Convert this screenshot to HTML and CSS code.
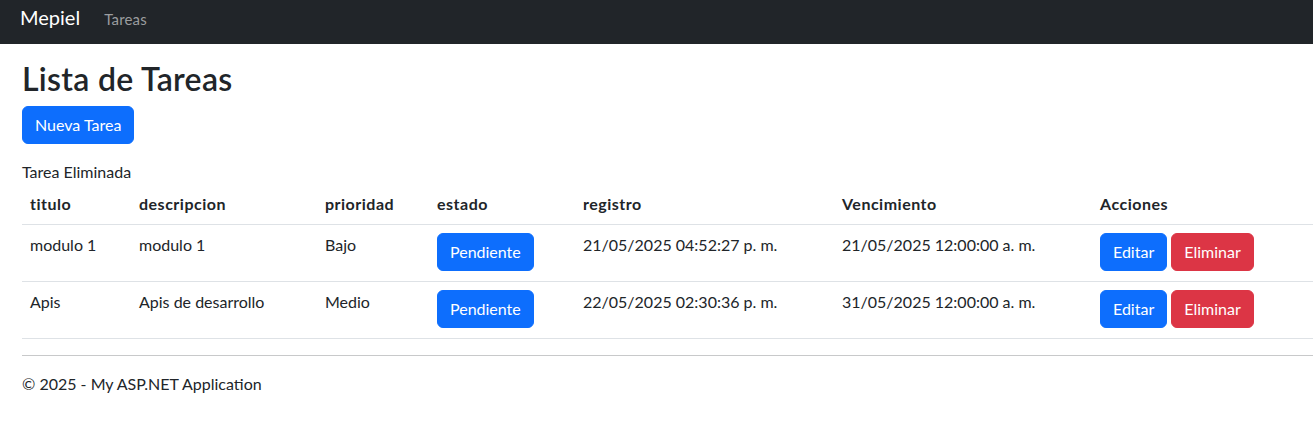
FILE: index.html
```html
<!DOCTYPE html>
<html lang="es">
<head>
<meta charset="utf-8">
<title>Lista de Tareas - Mepiel</title>
<link rel="stylesheet" href="styles.css">
</head>
<body>
<nav class="navbar">
  <a class="brand" href="#">Mepiel</a>
  <a class="nav-link" href="#">Tareas</a>
</nav>
<main class="content">
  <h2 class="title">Lista de Tareas</h2>
  <p class="toolbar"><a class="btn btn-primary" href="#">Nueva Tarea</a></p>
  <div class="notice">Tarea Eliminada</div>
  <table class="table">
    <colgroup>
      <col class="c-titulo"><col class="c-desc"><col class="c-prio"><col class="c-estado"><col class="c-reg"><col class="c-venc"><col class="c-acc">
    </colgroup>
    <thead>
      <tr><th>titulo</th><th>descripcion</th><th>prioridad</th><th>estado</th><th>registro</th><th>Vencimiento</th><th>Acciones</th></tr>
    </thead>
    <tbody>
      <tr>
        <td>modulo 1</td><td>modulo 1</td><td>Bajo</td>
        <td><a class="btn btn-primary" href="#">Pendiente</a></td>
        <td>21/05/2025 04:52:27 p. m.</td><td>21/05/2025 12:00:00 a. m.</td>
        <td><a class="btn btn-primary" href="#">Editar</a> <a class="btn btn-danger" href="#">Eliminar</a></td>
      </tr>
      <tr>
        <td>Apis</td><td>Apis de desarrollo</td><td>Medio</td>
        <td><a class="btn btn-primary" href="#">Pendiente</a></td>
        <td>22/05/2025 02:30:36 p. m.</td><td>31/05/2025 12:00:00 a. m.</td>
        <td><a class="btn btn-primary" href="#">Editar</a> <a class="btn btn-danger" href="#">Eliminar</a></td>
      </tr>
    </tbody>
  </table>
  <hr class="divider">
  <footer class="footer"><p>&copy; 2025 - My ASP.NET Application</p></footer>
</main>
</body>
</html>
```
FILE: styles.css
```css
* { box-sizing: border-box; }
html, body { margin: 0; padding: 0; }
body {
  font-family: Lato, "Open Sans", "Liberation Sans", sans-serif;
  font-size: 16px;
  line-height: 1.5;
  color: #212529;
  background: #fff;
  overflow-x: hidden;
}
.navbar {
  display: flex;
  align-items: baseline;
  height: 44px;
  padding: 2px 20px 0;
  background: #212529;
}
.brand {
  font-size: 20px;
  line-height: 30px;
  color: #fff;
  text-decoration: none;
  margin-right: 16px;
}
.nav-link {
  font-size: 15px;
  padding: 0 8px;
  color: #9b9d9f;
  text-decoration: none;
  letter-spacing: 0.2px;
}
.content { padding: 0 0 0 22px; }
.title {
  margin: 16px 0 8px;
  font-size: 32px;
  line-height: 1.2;
  font-weight: 600;
  letter-spacing: 0.3px;
}
.toolbar { margin: 0 0 16px; }
.btn {
  display: inline-block;
  padding: 6px 12px;
  font-size: 16px;
  line-height: 24px;
  border: 1px solid transparent;
  border-radius: 6px;
  color: #fff;
  text-decoration: none;
  vertical-align: middle;
}
.btn-primary { background: #0d6efd; border-color: #0d6efd; }
.btn-danger { background: #dc3545; border-color: #dc3545; }
.table {
  width: 100%;
  table-layout: fixed;
  border-collapse: collapse;
  margin-bottom: 16px;
}
.c-titulo { width: 109px; }
.c-desc { width: 186px; }
.c-prio { width: 112px; }
.c-estado { width: 146px; }
.c-reg { width: 259px; }
.c-venc { width: 258px; }
.table th {
  text-align: left;
  font-weight: 700;
  padding: 8px;
  border-bottom: 1px solid #dee2e6;
  vertical-align: bottom;
  letter-spacing: 0.5px;
}
.table td {
  padding: 8px 8px 10px;
  border-bottom: 1px solid #dee2e6;
  vertical-align: top;
  white-space: nowrap;
}
.divider {
  margin: 0 0 16px;
  border: 0;
  border-top: 1px solid #c8c9ca;
}
.footer p { margin: 0 0 16px; }
```
